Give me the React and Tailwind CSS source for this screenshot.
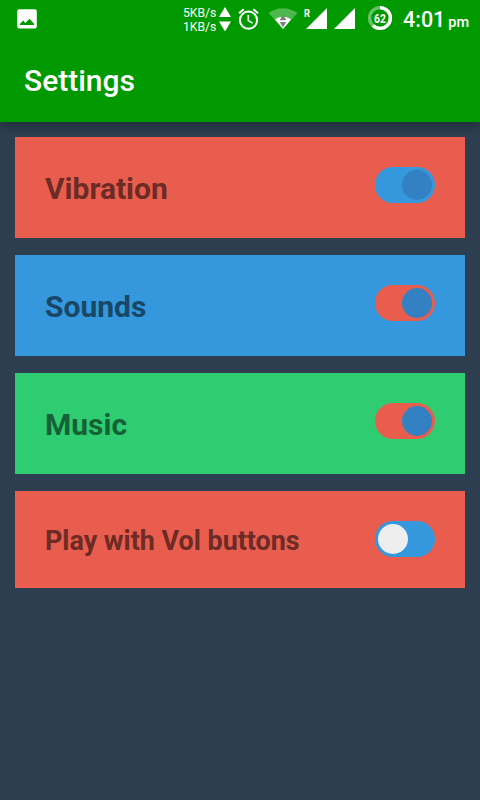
const rows = [
  { label: 'Vibration', on: true, card: 'h-[101px] bg-[#e95d4e] text-[#6d2b25]', text: 'text-[30px] pt-[33px]', track: 'bg-[#3598dc]' },
  { label: 'Sounds', on: true, card: 'h-[101px] bg-[#3598dc] text-[#194767]', text: 'text-[30px] pt-[33px]', track: 'bg-[#e95d4e]' },
  { label: 'Music', on: true, card: 'h-[101px] bg-[#2ecd71] text-[#166035]', text: 'text-[30px] pt-[33px]', track: 'bg-[#e95d4e]' },
  { label: 'Play with Vol buttons', on: false, card: 'h-[97px] bg-[#e95d4e] text-[#6d2b25]', text: 'text-[26.9px] pt-[31px]', track: 'bg-[#3598dc]' },
];

function Toggle({ on, track }) {
  return (
    <button
      role="switch"
      aria-checked={on}
      className={`mt-[30px] flex h-9 w-[60px] items-center rounded-full px-[3px] ${track} ${on ? 'justify-end' : 'justify-start'}`}
    >
      <span className={`size-[30px] rounded-full ${on ? 'bg-[#3380c2]' : 'bg-[#eeeeee]'}`} />
    </button>
  );
}

function PictureIcon() {
  return (
    <svg className="mt-[9px] ml-[17px] h-5 w-5" viewBox="0 0 20 20">
      <rect x="0.2" y="0.2" width="19.6" height="19.4" rx="2" fill="#fff" />
      <path d="M3 16V14.8L6.2 11.6 8.3 14 12.5 9.8 17 14.8V16Z" fill="#009a00" />
    </svg>
  );
}

function NetSpeed() {
  return (
    <div className="mt-1.5 ml-[146px] flex">
      <div className="w-9 text-[12.2px] leading-[14px] whitespace-nowrap">
        <p>5KB/s</p>
        <p>1KB/s</p>
      </div>
      <svg className="mt-px h-6 w-3" viewBox="0 0 12 24" fill="#fff">
        <path d="M6 0 12 10H0Z" />
        <path d="M0 14.5H12L6 24.5Z" />
      </svg>
    </div>
  );
}

function AlarmIcon() {
  return (
    <svg className="mt-2 ml-[7px] h-[23px] w-[22px]" viewBox="0 0 22 23" fill="none" stroke="#fff" strokeWidth="2">
      <circle cx="10.5" cy="12.2" r="8.6" />
      <path d="M1 5.2 5.7 1.3M15.3 1.3 20 5.2" />
      <path d="M10.3 7V12.6L14.6 15.1" strokeWidth="1.6" />
    </svg>
  );
}

function WifiIcon() {
  return (
    <svg className="mt-2 ml-2 h-[21px] w-[30px]" viewBox="0 0 30 21">
      <path d="M0.5 5C9-1.5 21-1.5 29.5 5L15 21Z" fill="#4db84d" />
      <path d="M7 11.6C11.5 7.8 18.5 7.8 23 11.6L15 21Z" fill="#fff" />
      <path d="M15 6.5 18.3 12.3H11.7ZM11.7 14H18.3L15 19.5Z" fill="#808080" />
    </svg>
  );
}

function Signal({ className }) {
  return (
    <svg className={`mt-2 h-[21px] w-[21px] ${className}`} viewBox="0 0 21 21" fill="#fff">
      <path d="M21 0V21H0Z" />
    </svg>
  );
}

function Battery() {
  return (
    <div className="mt-[5px] ml-3 grid h-[26px] w-[26px] place-items-center">
      <svg className="col-start-1 row-start-1 h-[26px] w-[26px]" viewBox="0 0 26 26" fill="none" strokeWidth="3.4">
        <circle cx="13" cy="13" r="10.4" stroke="#66c266" />
        <circle cx="13" cy="13" r="10.4" stroke="#fff" pathLength="100" strokeDasharray="62 38" transform="rotate(-90 13 13)" />
      </svg>
      <span className="col-start-1 row-start-1 mt-px scale-x-85 text-[12px] leading-none font-bold">62</span>
    </div>
  );
}

function StatusBar() {
  return (
    <div className="flex h-[38px] items-start">
      <PictureIcon />
      <NetSpeed />
      <AlarmIcon />
      <WifiIcon />
      <span className="mt-[7px] ml-1.5 -mr-2 w-2 origin-left scale-x-85 text-[11px] leading-[13px] font-bold">R</span>
      <Signal className="ml-0.5" />
      <Signal className="ml-[7px]" />
      <Battery />
      <p className="mt-[7px] ml-2.5 font-medium whitespace-nowrap">
        <span className="text-[21.5px] leading-[26px]">4:01</span>
        <span className="ml-[3px] text-[14.5px]">pm</span>
      </p>
    </div>
  );
}

export default function App() {
  return (
    <div className="h-[800px] w-[480px] overflow-hidden bg-[#2d3e50] font-['Roboto',sans-serif]">
      <header className="h-[122px] bg-[#009a00] text-white shadow-[0_4px_9px_rgba(0,0,0,0.3)]">
        <StatusBar />
        <h1 className="mt-6 ml-6 text-[30px] leading-[38px] font-medium">Settings</h1>
      </header>
      <main className="flex flex-col gap-[17px] px-[15px] pt-[15px]">
        {rows.map((r) => (
          <section key={r.label} className={`flex items-start justify-between px-[30px] ${r.card}`}>
            <h2 className={`leading-[38px] font-bold ${r.text}`}>{r.label}</h2>
            <Toggle on={r.on} track={r.track} />
          </section>
        ))}
      </main>
    </div>
  );
}
